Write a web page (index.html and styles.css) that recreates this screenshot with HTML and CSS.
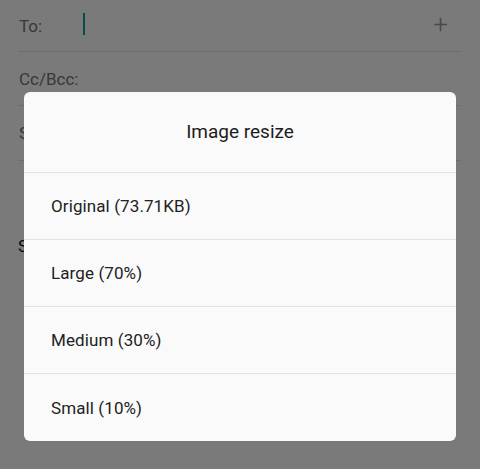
FILE: index.html
```html
<!DOCTYPE html>
<html lang="en">
<head>
    <meta charset="UTF-8">
    <meta name="viewport" content="width=device-width, initial-scale=1.0">
    <title>Compose</title>
    <link rel="stylesheet" href="styles.css">
</head>
<body>

    <div class="compose">
        <div class="field">
            <span class="label">To:</span>
            <span class="cursor"></span>
            <span class="add">+</span>
        </div>
        <div class="field">
            <span class="label">Cc/Bcc:</span>
        </div>
        <div class="field short">
            <span class="label">Subject</span>
        </div>
        <div class="body-text">Sent from my phone</div>
    </div>

    <div class="overlay">
        <div class="dialog">
            <div class="dialog-title">Image resize</div>
            <div class="option">Original (73.71KB)</div>
            <div class="option">Large (70%)</div>
            <div class="option">Medium (30%)</div>
            <div class="option">Small (10%)</div>
        </div>
    </div>

</body>
</html>
```

FILE: styles.css
```css
html, body {
    margin: 0;
    height: 100%;
}
body {
    font-family: Roboto, "Noto Sans", sans-serif;
    background-color: #ffffff;
    position: relative;
    overflow: hidden;
}
.compose {
    padding: 0 19px 0 18px;
}
.field {
    display: flex;
    align-items: center;
    height: 53px;
    border-bottom: 1px solid #e4e4e4;
    color: #757575;
    font-size: 17px;
}
.field:first-child {
    height: 51px;
}
.field.short {
    height: 54px;
}
.label {
    padding-left: 1px;
    width: 64px;
}
.cursor {
    width: 2px;
    height: 22px;
    background-color: #1a9aa0;
    margin-bottom: 3px;
}
.add {
    margin-left: auto;
    margin-right: 13px;
    font-size: 26px;
    font-weight: 300;
    color: #9a9a9a;
    margin-bottom: 3px;
}
.body-text {
    margin-top: 75px;
    color: #111;
    font-size: 17px;
}
.overlay {
    position: absolute;
    inset: 0;
    background-color: rgba(0, 0, 0, 0.52);
}
.dialog {
    margin: 92px 24px 0;
    background-color: #fafafa;
    border-radius: 6px;
    overflow: hidden;
}
.dialog-title {
    height: 81px;
    display: flex;
    align-items: center;
    justify-content: center;
    font-size: 19px;
    color: #1c1c1c;
    border-bottom: 1px solid #e3e3e3;
    padding-bottom: 2px;
    box-sizing: border-box;
}
.option {
    height: 67px;
    display: flex;
    align-items: center;
    padding-left: 27px;
    font-size: 17px;
    letter-spacing: 0.1px;
    color: #222;
    border-bottom: 1px solid #e3e3e3;
    box-sizing: border-box;
}
.option:last-child {
    border-bottom: none;
}
```
